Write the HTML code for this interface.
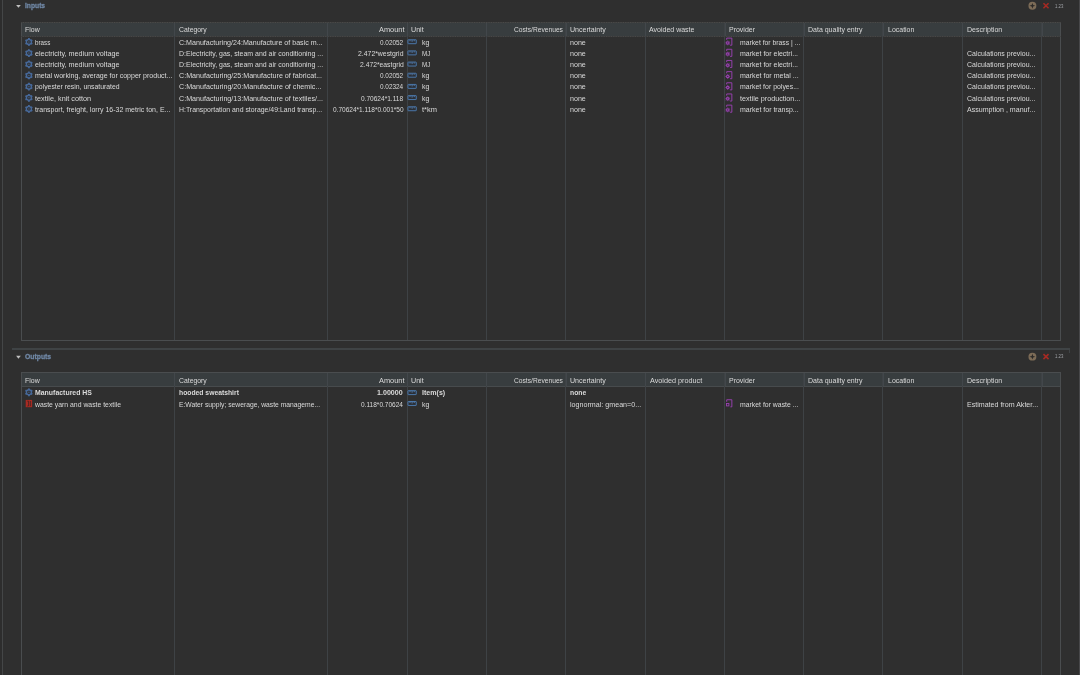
<!DOCTYPE html>
<html><head><meta charset="utf-8"><title>openLCA exchanges</title>
<style>
html,body{margin:0;padding:0;}
body{width:1080px;height:675px;overflow:hidden;background:#2f2f2f;position:relative;
 font-family:"Liberation Sans",sans-serif;color:#dadada;}
.t{position:absolute;transform-origin:0 0;white-space:nowrap;line-height:11px;height:11px;display:block;}
.i{position:absolute;overflow:visible;}
.edgeL{position:absolute;left:0;top:0;width:2px;height:675px;background:#2d2d2d;}
.edgeL2{position:absolute;left:2px;top:0;width:1px;height:675px;background:#444647;}
.edgeR{position:absolute;left:1079px;top:0;width:1px;height:675px;background:#48484a;}
.tbl{position:absolute;left:21px;width:1040px;border:1px solid #4a4d4f;box-sizing:border-box;}
.hdr{position:absolute;left:0;top:0;right:0;height:13px;background:#383d3f;border-bottom:1px solid #45494b;}
.hdr.solid{border-bottom-color:#474b4d;}
.vs{position:absolute;top:0;bottom:0;width:1px;background:#3e4245;}
.hs{position:absolute;top:0;height:13px;width:1px;background:#42474b;}
.dot .hdr{border-bottom:none;height:14px;}
.dotT,.dotB{position:absolute;left:-1px;right:-1px;height:1px;}
.dotT{top:-1px;background:repeating-linear-gradient(90deg,#4b4b49 0,#393a3b 1.2px,#4b4b49 2.4px);}
.dotB{top:13px;background:repeating-linear-gradient(90deg,#4a4946 0,#35373a 1.2px,#4a4946 2.4px);}
.bar{position:absolute;left:12px;top:348.3px;width:1057.5px;height:2px;background:#3f4345;}
.bartick{position:absolute;left:1068.5px;top:350px;width:1px;height:2.5px;background:#3f4345;}
.L{position:absolute;left:0;top:0;width:1080px;height:675px;filter:blur(0.3px);}
</style></head><body>
<svg width="0" height="0" style="position:absolute">
<defs>
 <g id="flow">
  <path d="M0 -2.8 L2.42 -1.4 L2.42 1.4 L0 2.8 L-2.42 1.4 L-2.42 -1.4 Z" fill="none" stroke="#47699a" stroke-width="1.5" stroke-linejoin="round"/>
  <path d="M0 -3.9 V-2.6 M0 3.9 V2.6 M3.38 -1.95 L2.25 -1.3 M-3.38 -1.95 L-2.25 -1.3 M3.38 1.95 L2.25 1.3 M-3.38 1.95 L-2.25 1.3" stroke="#47699a" stroke-width="1.7"/>
  <circle r="0.8" fill="#3d5c88"/>
 </g>
 <g id="waste">
  <rect x="-3.2" y="-3.7" width="6.4" height="7.3" fill="#a82a22"/>
  <path d="M-1.6 -2.4 H-0.4 V2.4 H-1.6" fill="none" stroke="#3a2220" stroke-width="0.7"/>
  <path d="M1.4 -2.6 V2.6" stroke="#3a2220" stroke-width="0.8"/>
 </g>
 <g id="unit">
  <rect x="-4.55" y="-2.2" width="8.3" height="3.95" rx="0.3" fill="#2b2f36" stroke="#4b78ab" stroke-width="1"/>
  <path d="M-2.5 -1.8 V-0.7 M-0.4 -1.8 V-0.2 M1.7 -1.8 V-0.7" stroke="#5a86b8" stroke-width="0.9"/>
 </g>
 <g id="prov">
  <path d="M-2.8 -2.0 V-3.65 H2.35 V3.45 H0.6" fill="none" stroke="#9a40b2" stroke-width="0.95" stroke-linejoin="round"/>
  <circle cx="-1.75" cy="1.15" r="1.2" fill="none" stroke="#9a40b2" stroke-width="1.15"/>
  <path d="M-1.75 -1.2 V-0.4 M-1.75 3.5 V2.7 M-4.1 1.15 H-3.3 M0.6 1.15 H-0.2 M-3.35 -0.45 L-2.8 0.1 M-0.15 -0.45 L-0.7 0.1 M-3.35 2.75 L-2.8 2.2 M-0.15 2.75 L-0.7 2.2" stroke="#9a40b2" stroke-width="0.85"/>
 </g>
 <g id="tri"><path d="M-2.3 -1.4 L2.4 -1.4 L0.05 1.45 Z" fill="#c0c0c0"/></g>
 <g id="prov2">
  <path d="M-2.8 -1.6 V-3.65 H2.35 V3.45 H0.9" fill="none" stroke="#9a40b2" stroke-width="0.95" stroke-linejoin="round"/>
  <rect x="-3.0" y="0.1" width="2.4" height="2.4" fill="none" stroke="#9a40b2" stroke-width="0.9"/>
 </g>
 <g id="add">
  <circle r="3.95" fill="#7d6c57"/>
  <path d="M-2.9 0 L-0.75 -0.75 L0 -2.9 L0.75 -0.75 L2.9 0 L0.75 0.75 L0 2.9 L-0.75 0.75 Z" fill="#2c2a28"/>
 </g>
 <g id="del">
  <path d="M-2.55 -2.5 L2.55 2.5 M2.55 -2.5 L-2.55 2.5" stroke="#a62a23" stroke-width="1.6"/>
 </g>
</defs></svg>
<div class="edgeL"></div><div class="edgeL2"></div><div class="edgeR"></div>
<div class="L">
<svg class="i" style="left:12px;top:0px" width="12" height="12"><use href="#tri" x="6.40" y="6.40"/></svg>
<span class="t" style="left:24.90px;top:0.00px;transform:scaleX(0.8934);font-size:7.5px;font-weight:bold;color:#7088a6;-webkit-text-stroke:0.3px;">Inputs</span>
<svg class="i" style="left:1026px;top:-1px" width="12" height="12"><use href="#add" x="6.40" y="6.80"/></svg>
<svg class="i" style="left:1040px;top:-1px" width="12" height="12"><use href="#del" x="6.00" y="6.80"/></svg>
<span class="t" style="left:1055.40px;top:0.50px;transform:scaleX(0.7992);font-size:5.4px;color:#a0a3a8;-webkit-text-stroke:0;">1.23</span>
<div class="tbl dot" style="top:22px;height:319px;">
<div class="hdr"></div>
<div class="dotT"></div><div class="dotB"></div>
<div class="vs" style="left:152px"></div>
<div class="hs" style="left:152px"></div>
<div class="vs" style="left:305px"></div>
<div class="hs" style="left:305px"></div>
<div class="vs" style="left:385px"></div>
<div class="hs" style="left:385px"></div>
<div class="vs" style="left:464px"></div>
<div class="hs" style="left:464px"></div>
<div class="vs" style="left:543px"></div>
<div class="hs" style="left:544px"></div>
<div class="vs" style="left:623px"></div>
<div class="hs" style="left:623px"></div>
<div class="vs" style="left:702px"></div>
<div class="hs" style="left:703px"></div>
<div class="vs" style="left:781px"></div>
<div class="hs" style="left:782px"></div>
<div class="vs" style="left:860px"></div>
<div class="hs" style="left:861px"></div>
<div class="vs" style="left:940px"></div>
<div class="hs" style="left:940px"></div>
<div class="vs" style="left:1019px"></div>
<div class="hs" style="left:1020px"></div>
</div>
<span class="t" style="left:25.20px;top:24.00px;transform:scaleX(0.9161);font-size:7.6px;">Flow</span>
<span class="t" style="left:178.90px;top:24.00px;transform:scaleX(0.9015);font-size:7.6px;">Category</span>
<span class="t" style="left:378.50px;top:24.00px;transform:scaleX(0.9736);font-size:7.6px;">Amount</span>
<span class="t" style="left:411.40px;top:24.00px;transform:scaleX(0.9397);font-size:7.6px;">Unit</span>
<span class="t" style="left:513.80px;top:24.00px;transform:scaleX(0.8787);font-size:7.6px;">Costs/Revenues</span>
<span class="t" style="left:570.00px;top:24.00px;transform:scaleX(0.9314);font-size:7.6px;">Uncertainty</span>
<span class="t" style="left:649.20px;top:24.00px;transform:scaleX(0.9230);font-size:7.6px;">Avoided waste</span>
<span class="t" style="left:728.70px;top:24.00px;transform:scaleX(0.9187);font-size:7.6px;">Provider</span>
<span class="t" style="left:808.00px;top:24.00px;transform:scaleX(0.9215);font-size:7.6px;">Data quality entry</span>
<span class="t" style="left:887.80px;top:24.00px;transform:scaleX(0.9188);font-size:7.6px;">Location</span>
<span class="t" style="left:966.80px;top:24.00px;transform:scaleX(0.9286);font-size:7.6px;">Description</span>
<svg class="i" style="left:22px;top:35px" width="12" height="12"><use href="#flow" x="6.90" y="6.95"/></svg>
<span class="t" style="left:35.00px;top:37.00px;transform:scaleX(0.8232);font-size:7.6px;">brass</span>
<span class="t" style="left:178.80px;top:37.00px;transform:scaleX(0.9345);font-size:7.6px;">C:Manufacturing/24:Manufacture of basic m...</span>
<span class="t" style="left:380.10px;top:37.00px;transform:scaleX(0.8445);font-size:7.6px;">0.02052</span>
<svg class="i" style="left:405px;top:35px" width="14" height="12"><use href="#unit" x="7.50" y="6.95"/></svg>
<span class="t" style="left:422.00px;top:37.00px;transform:scaleX(0.9219);font-size:7.6px;">kg</span>
<span class="t" style="left:570.00px;top:37.00px;transform:scaleX(0.9345);font-size:7.6px;">none</span>
<svg class="i" style="left:723px;top:35px" width="12" height="12"><use href="#prov" x="6.50" y="6.75"/></svg>
<span class="t" style="left:739.60px;top:37.00px;transform:scaleX(0.8957);font-size:7.6px;">market for brass | ...</span>
<svg class="i" style="left:22px;top:47px" width="12" height="12"><use href="#flow" x="6.90" y="6.12"/></svg>
<span class="t" style="left:35.00px;top:48.00px;transform:scaleX(0.9496);font-size:7.6px;">electricity, medium voltage</span>
<span class="t" style="left:178.80px;top:48.00px;transform:scaleX(0.9160);font-size:7.6px;">D:Electricity, gas, steam and air conditioning ...</span>
<span class="t" style="left:357.80px;top:48.00px;transform:scaleX(0.9050);font-size:7.6px;">2.472*westgrid</span>
<svg class="i" style="left:405px;top:47px" width="14" height="12"><use href="#unit" x="7.50" y="6.12"/></svg>
<span class="t" style="left:422.00px;top:48.00px;transform:scaleX(0.8193);font-size:7.6px;">MJ</span>
<span class="t" style="left:570.00px;top:48.00px;transform:scaleX(0.9345);font-size:7.6px;">none</span>
<svg class="i" style="left:723px;top:46px" width="12" height="12"><use href="#prov" x="6.50" y="6.92"/></svg>
<span class="t" style="left:739.60px;top:48.00px;transform:scaleX(0.9233);font-size:7.6px;">market for electri...</span>
<span class="t" style="left:966.80px;top:48.00px;transform:scaleX(0.9148);font-size:7.6px;">Calculations previou...</span>
<svg class="i" style="left:22px;top:58px" width="12" height="12"><use href="#flow" x="6.90" y="6.29"/></svg>
<span class="t" style="left:35.00px;top:59.00px;transform:scaleX(0.9496);font-size:7.6px;">electricity, medium voltage</span>
<span class="t" style="left:178.80px;top:59.00px;transform:scaleX(0.9160);font-size:7.6px;">D:Electricity, gas, steam and air conditioning ...</span>
<span class="t" style="left:359.60px;top:59.00px;transform:scaleX(0.8916);font-size:7.6px;">2.472*eastgrid</span>
<svg class="i" style="left:405px;top:58px" width="14" height="12"><use href="#unit" x="7.50" y="6.29"/></svg>
<span class="t" style="left:422.00px;top:59.00px;transform:scaleX(0.8193);font-size:7.6px;">MJ</span>
<span class="t" style="left:570.00px;top:59.00px;transform:scaleX(0.9345);font-size:7.6px;">none</span>
<svg class="i" style="left:723px;top:58px" width="12" height="12"><use href="#prov" x="6.50" y="6.09"/></svg>
<span class="t" style="left:739.60px;top:59.00px;transform:scaleX(0.9233);font-size:7.6px;">market for electri...</span>
<span class="t" style="left:966.80px;top:59.00px;transform:scaleX(0.9148);font-size:7.6px;">Calculations previou...</span>
<svg class="i" style="left:22px;top:69px" width="12" height="12"><use href="#flow" x="6.90" y="6.46"/></svg>
<span class="t" style="left:35.00px;top:70.00px;transform:scaleX(0.9247);font-size:7.6px;">metal working, average for copper product...</span>
<span class="t" style="left:178.80px;top:70.00px;transform:scaleX(0.9390);font-size:7.6px;">C:Manufacturing/25:Manufacture of fabricat...</span>
<span class="t" style="left:380.10px;top:70.00px;transform:scaleX(0.8445);font-size:7.6px;">0.02052</span>
<svg class="i" style="left:405px;top:69px" width="14" height="12"><use href="#unit" x="7.50" y="6.46"/></svg>
<span class="t" style="left:422.00px;top:70.00px;transform:scaleX(0.9219);font-size:7.6px;">kg</span>
<span class="t" style="left:570.00px;top:70.00px;transform:scaleX(0.9345);font-size:7.6px;">none</span>
<svg class="i" style="left:723px;top:69px" width="12" height="12"><use href="#prov" x="6.50" y="6.26"/></svg>
<span class="t" style="left:739.60px;top:70.00px;transform:scaleX(0.9266);font-size:7.6px;">market for metal ...</span>
<span class="t" style="left:966.80px;top:70.00px;transform:scaleX(0.9148);font-size:7.6px;">Calculations previou...</span>
<svg class="i" style="left:22px;top:80px" width="12" height="12"><use href="#flow" x="6.90" y="6.63"/></svg>
<span class="t" style="left:35.00px;top:81.00px;transform:scaleX(0.9031);font-size:7.6px;">polyester resin, unsaturated</span>
<span class="t" style="left:178.80px;top:81.00px;transform:scaleX(0.9396);font-size:7.6px;">C:Manufacturing/20:Manufacture of chemic...</span>
<span class="t" style="left:380.10px;top:81.00px;transform:scaleX(0.8445);font-size:7.6px;">0.02324</span>
<svg class="i" style="left:405px;top:80px" width="14" height="12"><use href="#unit" x="7.50" y="6.63"/></svg>
<span class="t" style="left:422.00px;top:81.00px;transform:scaleX(0.9219);font-size:7.6px;">kg</span>
<span class="t" style="left:570.00px;top:81.00px;transform:scaleX(0.9345);font-size:7.6px;">none</span>
<svg class="i" style="left:723px;top:80px" width="12" height="12"><use href="#prov" x="6.50" y="6.43"/></svg>
<span class="t" style="left:739.60px;top:81.00px;transform:scaleX(0.9130);font-size:7.6px;">market for polyes...</span>
<span class="t" style="left:966.80px;top:81.00px;transform:scaleX(0.9148);font-size:7.6px;">Calculations previou...</span>
<svg class="i" style="left:22px;top:91px" width="12" height="12"><use href="#flow" x="6.90" y="6.80"/></svg>
<span class="t" style="left:35.00px;top:93.00px;transform:scaleX(0.9571);font-size:7.6px;">textile, knit cotton</span>
<span class="t" style="left:178.80px;top:93.00px;transform:scaleX(0.9391);font-size:7.6px;">C:Manufacturing/13:Manufacture of textiles/...</span>
<span class="t" style="left:361.20px;top:93.00px;transform:scaleX(0.8612);font-size:7.6px;">0.70624*1.118</span>
<svg class="i" style="left:405px;top:91px" width="14" height="12"><use href="#unit" x="7.50" y="6.80"/></svg>
<span class="t" style="left:422.00px;top:93.00px;transform:scaleX(0.9219);font-size:7.6px;">kg</span>
<span class="t" style="left:570.00px;top:93.00px;transform:scaleX(0.9345);font-size:7.6px;">none</span>
<svg class="i" style="left:723px;top:91px" width="12" height="12"><use href="#prov" x="6.50" y="6.60"/></svg>
<span class="t" style="left:739.60px;top:93.00px;transform:scaleX(0.9468);font-size:7.6px;">textile production...</span>
<span class="t" style="left:966.80px;top:93.00px;transform:scaleX(0.9148);font-size:7.6px;">Calculations previou...</span>
<svg class="i" style="left:22px;top:102px" width="12" height="12"><use href="#flow" x="6.90" y="6.97"/></svg>
<span class="t" style="left:35.00px;top:104.00px;transform:scaleX(0.9218);font-size:7.6px;">transport, freight, lorry 16-32 metric ton, E...</span>
<span class="t" style="left:178.80px;top:104.00px;transform:scaleX(0.9079);font-size:7.6px;">H:Transportation and storage/49:Land transp...</span>
<span class="t" style="left:332.70px;top:104.00px;transform:scaleX(0.8581);font-size:7.6px;">0.70624*1.118*0.001*50</span>
<svg class="i" style="left:405px;top:102px" width="14" height="12"><use href="#unit" x="7.50" y="6.97"/></svg>
<span class="t" style="left:422.00px;top:104.00px;transform:scaleX(0.9868);font-size:7.6px;">t*km</span>
<span class="t" style="left:570.00px;top:104.00px;transform:scaleX(0.9345);font-size:7.6px;">none</span>
<svg class="i" style="left:723px;top:102px" width="12" height="12"><use href="#prov" x="6.50" y="6.77"/></svg>
<span class="t" style="left:739.60px;top:104.00px;transform:scaleX(0.9204);font-size:7.6px;">market for transp...</span>
<span class="t" style="left:966.80px;top:104.00px;transform:scaleX(0.9306);font-size:7.6px;">Assumption , manuf...</span>
<div class="bar"></div><div class="bartick"></div>
<svg class="i" style="left:12px;top:351px" width="12" height="12"><use href="#tri" x="6.40" y="6.25"/></svg>
<span class="t" style="left:24.90px;top:351.00px;transform:scaleX(0.9080);font-size:7.5px;font-weight:bold;color:#7088a6;-webkit-text-stroke:0.3px;">Outputs</span>
<svg class="i" style="left:1026px;top:350px" width="12" height="12"><use href="#add" x="6.40" y="6.65"/></svg>
<svg class="i" style="left:1040px;top:350px" width="12" height="12"><use href="#del" x="6.00" y="6.65"/></svg>
<span class="t" style="left:1055.40px;top:350.50px;transform:scaleX(0.7992);font-size:5.4px;color:#a0a3a8;-webkit-text-stroke:0;">1.23</span>
<div class="tbl" style="top:372.0px;height:318.0px;border-bottom:none;">
<div class="hdr solid"></div>
<div class="vs" style="left:152px"></div>
<div class="hs" style="left:152px"></div>
<div class="vs" style="left:305px"></div>
<div class="hs" style="left:305px"></div>
<div class="vs" style="left:385px"></div>
<div class="hs" style="left:385px"></div>
<div class="vs" style="left:464px"></div>
<div class="hs" style="left:464px"></div>
<div class="vs" style="left:543px"></div>
<div class="hs" style="left:544px"></div>
<div class="vs" style="left:623px"></div>
<div class="hs" style="left:623px"></div>
<div class="vs" style="left:702px"></div>
<div class="hs" style="left:703px"></div>
<div class="vs" style="left:781px"></div>
<div class="hs" style="left:782px"></div>
<div class="vs" style="left:860px"></div>
<div class="hs" style="left:861px"></div>
<div class="vs" style="left:940px"></div>
<div class="hs" style="left:940px"></div>
<div class="vs" style="left:1019px"></div>
<div class="hs" style="left:1020px"></div>
</div>
<span class="t" style="left:25.20px;top:375.00px;transform:scaleX(0.9161);font-size:7.6px;">Flow</span>
<span class="t" style="left:178.90px;top:375.00px;transform:scaleX(0.9015);font-size:7.6px;">Category</span>
<span class="t" style="left:378.50px;top:375.00px;transform:scaleX(0.9736);font-size:7.6px;">Amount</span>
<span class="t" style="left:411.40px;top:375.00px;transform:scaleX(0.9397);font-size:7.6px;">Unit</span>
<span class="t" style="left:513.80px;top:375.00px;transform:scaleX(0.8787);font-size:7.6px;">Costs/Revenues</span>
<span class="t" style="left:570.00px;top:375.00px;transform:scaleX(0.9314);font-size:7.6px;">Uncertainty</span>
<span class="t" style="left:649.50px;top:375.00px;transform:scaleX(0.9527);font-size:7.6px;">Avoided product</span>
<span class="t" style="left:728.70px;top:375.00px;transform:scaleX(0.9187);font-size:7.6px;">Provider</span>
<span class="t" style="left:808.00px;top:375.00px;transform:scaleX(0.9215);font-size:7.6px;">Data quality entry</span>
<span class="t" style="left:887.80px;top:375.00px;transform:scaleX(0.9188);font-size:7.6px;">Location</span>
<span class="t" style="left:966.80px;top:375.00px;transform:scaleX(0.9286);font-size:7.6px;">Description</span>
<svg class="i" style="left:22px;top:386px" width="12" height="12"><use href="#flow" x="6.90" y="6.30"/></svg>
<span class="t" style="left:35.00px;top:387.00px;transform:scaleX(0.9120);font-size:7.6px;font-weight:bold;">Manufactured HS</span>
<span class="t" style="left:178.80px;top:387.00px;transform:scaleX(0.8929);font-size:7.6px;font-weight:bold;">hooded sweatshirt</span>
<span class="t" style="left:377.40px;top:387.00px;transform:scaleX(0.9355);font-size:7.6px;font-weight:bold;">1.00000</span>
<svg class="i" style="left:405px;top:386px" width="14" height="12"><use href="#unit" x="7.50" y="6.85"/></svg>
<span class="t" style="left:422.00px;top:387.00px;transform:scaleX(0.9311);font-size:7.6px;font-weight:bold;">Item(s)</span>
<span class="t" style="left:570.00px;top:387.00px;transform:scaleX(0.8978);font-size:7.6px;font-weight:bold;">none</span>
<svg class="i" style="left:22px;top:397px" width="12" height="12"><use href="#waste" x="6.90" y="6.60"/></svg>
<span class="t" style="left:35.00px;top:399.00px;transform:scaleX(0.9029);font-size:7.6px;">waste yarn and waste textile</span>
<span class="t" style="left:178.80px;top:399.00px;transform:scaleX(0.8882);font-size:7.6px;">E:Water supply; sewerage, waste manageme...</span>
<span class="t" style="left:361.10px;top:399.00px;transform:scaleX(0.8592);font-size:7.6px;">0.118*0.70624</span>
<svg class="i" style="left:405px;top:397px" width="14" height="12"><use href="#unit" x="7.50" y="6.70"/></svg>
<span class="t" style="left:422.00px;top:399.00px;transform:scaleX(0.9219);font-size:7.6px;">kg</span>
<span class="t" style="left:570.00px;top:399.00px;transform:scaleX(0.9389);font-size:7.6px;">lognormal: gmean=0...</span>
<svg class="i" style="left:723px;top:397px" width="12" height="12"><use href="#prov2" x="6.50" y="6.40"/></svg>
<span class="t" style="left:739.60px;top:399.00px;transform:scaleX(0.9053);font-size:7.6px;">market for waste ...</span>
<span class="t" style="left:966.80px;top:399.00px;transform:scaleX(0.9313);font-size:7.6px;">Estimated from Akter...</span>
</div>
</body></html>
